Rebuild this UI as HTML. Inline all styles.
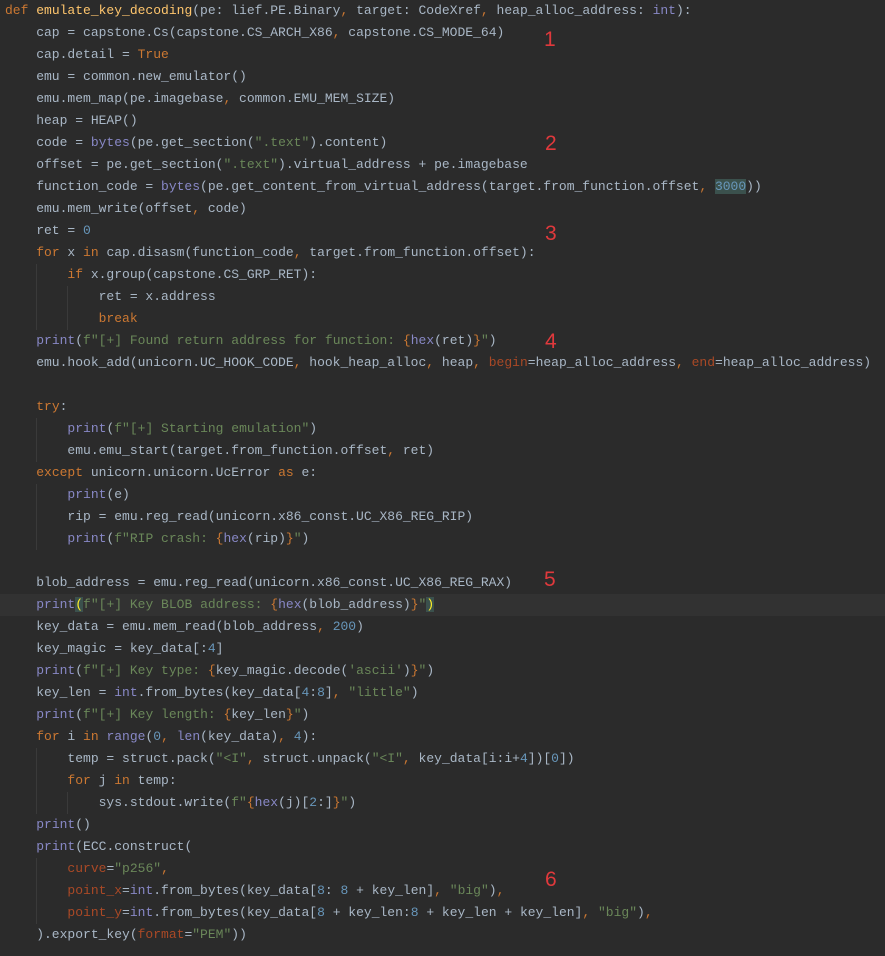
<!DOCTYPE html>
<html><head><meta charset="utf-8"><style>
html,body{margin:0;padding:0;background:#2b2b2b;width:885px;height:956px;overflow:hidden}
pre{margin:0;position:absolute;left:5px;top:0;font-family:"Liberation Mono",monospace;font-size:13px;line-height:22px;color:#a9b7c6}
.k{color:#cc7832}.f{color:#ffc66d}.s{color:#6a8759}.n{color:#6897bb}.b{color:#8888c6}.p{color:#aa4926}
.hl{position:absolute;left:0;top:594px;width:885px;height:22px;background:#323232}
.r{position:absolute;color:#e0393c;font-family:"Liberation Sans",sans-serif;font-size:21px}
.g{position:absolute;width:1px;background:#3a3a3a}
</style></head><body>
<div class="hl"></div>
<div class="g" style="left:36px;top:264px;height:66px"></div>
<div class="g" style="left:67px;top:286px;height:44px"></div>
<div class="g" style="left:36px;top:418px;height:44px"></div>
<div class="g" style="left:36px;top:484px;height:66px"></div>
<div class="g" style="left:36px;top:748px;height:66px"></div>
<div class="g" style="left:67px;top:792px;height:22px"></div>
<div class="g" style="left:36px;top:858px;height:66px"></div>
<pre><span class="k">def</span> <span class="f">emulate_key_decoding</span>(pe: lief.PE.Binary<span class="k">,</span> target: CodeXref<span class="k">,</span> heap_alloc_address: <span class="b">int</span>):
    cap = capstone.Cs(capstone.CS_ARCH_X86<span class="k">,</span> capstone.CS_MODE_64)
    cap.detail = <span class="k">True</span>
    emu = common.new_emulator()
    emu.mem_map(pe.imagebase<span class="k">,</span> common.EMU_MEM_SIZE)
    heap = HEAP()
    code = <span class="b">bytes</span>(pe.get_section(<span class="s">".text"</span>).content)
    offset = pe.get_section(<span class="s">".text"</span>).virtual_address + pe.imagebase
    function_code = <span class="b">bytes</span>(pe.get_content_from_virtual_address(target.from_function.offset<span class="k">,</span> <span class="n" style="background:#3b514d">3000</span>))
    emu.mem_write(offset<span class="k">,</span> code)
    ret = <span class="n">0</span>
    <span class="k">for</span> x <span class="k">in</span> cap.disasm(function_code<span class="k">,</span> target.from_function.offset):
        <span class="k">if</span> x.group(capstone.CS_GRP_RET):
            ret = x.address
            <span class="k">break</span>
    <span class="b">print</span>(<span class="s">f"[+] Found return address for function: </span><span class="k">{</span><span class="b">hex</span>(ret)<span class="k">}</span><span class="s">"</span>)
    emu.hook_add(unicorn.UC_HOOK_CODE<span class="k">,</span> hook_heap_alloc<span class="k">,</span> heap<span class="k">,</span> <span class="p">begin</span>=heap_alloc_address<span class="k">,</span> <span class="p">end</span>=heap_alloc_address)

    <span class="k">try</span>:
        <span class="b">print</span>(<span class="s">f"[+] Starting emulation"</span>)
        emu.emu_start(target.from_function.offset<span class="k">,</span> ret)
    <span class="k">except</span> unicorn.unicorn.UcError <span class="k">as</span> e:
        <span class="b">print</span>(e)
        rip = emu.reg_read(unicorn.x86_const.UC_X86_REG_RIP)
        <span class="b">print</span>(<span class="s">f"RIP crash: </span><span class="k">{</span><span class="b">hex</span>(rip)<span class="k">}</span><span class="s">"</span>)

    blob_address = emu.reg_read(unicorn.x86_const.UC_X86_REG_RAX)
    <span class="b">print</span><span style="color:#ffef28;background:#3b514d">(</span><span class="s">f"[+] Key BLOB address: </span><span class="k">{</span><span class="b">hex</span>(blob_address)<span class="k">}</span><span class="s">"</span><span style="color:#ffef28;background:#3b514d">)</span>
    key_data = emu.mem_read(blob_address<span class="k">,</span> <span class="n">200</span>)
    key_magic = key_data[:<span class="n">4</span>]
    <span class="b">print</span>(<span class="s">f"[+] Key type: </span><span class="k">{</span>key_magic.decode(<span class="s">'ascii'</span>)<span class="k">}</span><span class="s">"</span>)
    key_len = <span class="b">int</span>.from_bytes(key_data[<span class="n">4</span>:<span class="n">8</span>]<span class="k">,</span> <span class="s">"little"</span>)
    <span class="b">print</span>(<span class="s">f"[+] Key length: </span><span class="k">{</span>key_len<span class="k">}</span><span class="s">"</span>)
    <span class="k">for</span> i <span class="k">in</span> <span class="b">range</span>(<span class="n">0</span><span class="k">,</span> <span class="b">len</span>(key_data)<span class="k">,</span> <span class="n">4</span>):
        temp = struct.pack(<span class="s">"&lt;I"</span><span class="k">,</span> struct.unpack(<span class="s">"&lt;I"</span><span class="k">,</span> key_data[i:i+<span class="n">4</span>])[<span class="n">0</span>])
        <span class="k">for</span> j <span class="k">in</span> temp:
            sys.stdout.write(<span class="s">f"</span><span class="k">{</span><span class="b">hex</span>(j)[<span class="n">2</span>:]<span class="k">}</span><span class="s">"</span>)
    <span class="b">print</span>()
    <span class="b">print</span>(ECC.construct(
        <span class="p">curve</span>=<span class="s">"p256"</span><span class="k">,</span>
        <span class="p">point_x</span>=<span class="b">int</span>.from_bytes(key_data[<span class="n">8</span>: <span class="n">8</span> + key_len]<span class="k">,</span> <span class="s">"big"</span>)<span class="k">,</span>
        <span class="p">point_y</span>=<span class="b">int</span>.from_bytes(key_data[<span class="n">8</span> + key_len:<span class="n">8</span> + key_len + key_len]<span class="k">,</span> <span class="s">"big"</span>)<span class="k">,</span>
    ).export_key(<span class="p">format</span>=<span class="s">"PEM"</span>))</pre>
<div class="r" style="left:544px;top:28px">1</div>
<div class="r" style="left:545px;top:132px">2</div>
<div class="r" style="left:545px;top:222px">3</div>
<div class="r" style="left:545px;top:330px">4</div>
<div class="r" style="left:544px;top:568px">5</div>
<div class="r" style="left:545px;top:868px">6</div>
</body></html>
